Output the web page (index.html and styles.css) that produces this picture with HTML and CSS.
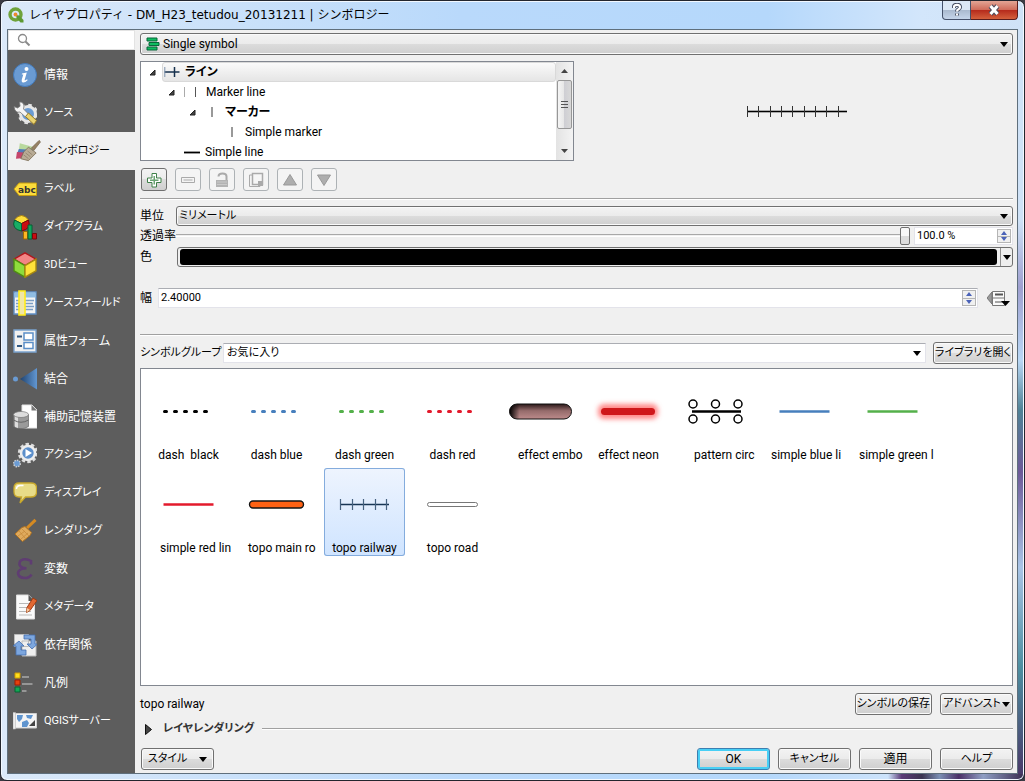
FILE: index.html
```html
<!DOCTYPE html>
<html lang="ja">
<head>
<meta charset="utf-8">
<title>レイヤプロパティ</title>
<link rel="stylesheet" href="styles.css">
</head>
<body>
<div class="window">
  <header class="titlebar">
    <svg class="logo" viewBox="0 0 16 16"><circle cx="7.5" cy="7.5" r="5.5" fill="none" stroke="#6fa33a" stroke-width="3.4"/><path d="M8 8l3.2.6L15.5 13v2.5h-3L8.6 11z" fill="#5d9a33"/><circle cx="7.5" cy="7.5" r="1.9" fill="#ee8a2d"/></svg>
    <h1 class="title">レイヤプロパティ - DM_H23_tetudou_20131211 | シンボロジー</h1>
    <div class="caption">
      <button class="cap cap-help" aria-label="ヘルプ表示"><svg viewBox="0 0 12 14"><path d="M3 5V4q0-2.200 3-2.200T9 4.200Q9 5.500 7.500 6.300 6 7 6 8.500M6 10.500v2" fill="none" stroke="#40485c" stroke-width="4"/><path d="M3 5V4q0-2.200 3-2.200T9 4.200Q9 5.500 7.500 6.300 6 7 6 8.500M6 10.500v2" fill="none" stroke="#fff" stroke-width="2.200"/></svg></button>
      <button class="cap cap-close" aria-label="閉じる"><svg viewBox="0 0 12 12"><path d="M2.500 2l7 8M9.500 2l-7 8" stroke="#4b4a5a" stroke-width="5"/><path d="M2.500 2l7 8M9.500 2l-7 8" stroke="#fff" stroke-width="3"/></svg></button>
    </div>
  </header>
  <div class="client">
    <aside class="sidebar">
      <label class="search"><svg viewBox="0 0 14 14"><circle cx="5.500" cy="5.500" r="4" fill="none" stroke="#8a8a8a" stroke-width="1.300"/><path d="M8.500 8.500l4 4" stroke="#8a8a8a" stroke-width="2"/></svg><input type="text" aria-label="検索"></label>
      <nav class="nav">
        <a href="#"><svg viewBox="0 0 24 24"><circle cx="12" cy="12" r="11.500" fill="#6a9bd3" stroke="#4379b8"/><circle cx="13.500" cy="6" r="2" fill="#fff"/><path d="M9 10.500l4.800-1-2.200 7.500q0 1.200 2.600-.7l.4.900q-3 3-5 2.200-1.500-.8-.8-3l1.500-5H8.800z" fill="#fff"/></svg>情報</a>
        <a href="#" class="kana"><svg viewBox="0 0 24 24"><circle cx="15" cy="13" r="7.500" fill="#6a9bd3" stroke="#e6e6e6" stroke-width="3"/><circle cx="15" cy="13" r="9.300" fill="none" stroke="#e6e6e6" stroke-width="2" stroke-dasharray="3.600 3.700"/><path d="M1 5.500L4.500 7l2.600-1.800L6.500 1Q10.500.8 11 5L10.500 8l6 6-3 3L7 11q-5 1.500-6-5.500z" fill="#f5f5f5" stroke="#777" stroke-width=".8"/><path d="M12.500 15.500l3-3.500 8 7.500-2.500 4z" fill="#ead370" stroke="#947a28"/></svg>ソース</a>
        <a href="#" class="kana current" aria-current="page"><svg viewBox="0 0 27 24"><path d="M5 4l15 4-2 6-14-3z" fill="#b9d99e"/><path d="M4 10l15 1-4 7-13-3z" fill="#4f7dba"/><path d="M2 13l14 1-3 5-12 1z" fill="#c5456b"/><path d="M17 9l8-8 1.500 1.500-7 9z" fill="#968164" stroke="#6f5d42" stroke-width=".7"/><path d="M9 13l5-5 8 6-8 8-8-2z" fill="#b9ac96" stroke="#776850" stroke-width=".8"/><path d="M9 16l5 4M11 14l5 4M13 12l5 4" stroke="#85765f" stroke-width=".7"/></svg>シンボロジー</a>
        <a href="#" class="kana"><svg viewBox="0 0 24 24"><path d="M1 12l5-6h17.500v12.500H6z" fill="#fcdc3b" stroke="#c59d12"/><text x="5" y="15.500" class="tag-text">abc</text></svg>ラベル</a>
        <a href="#" class="kana"><svg viewBox="0 0 24 24"><path d="M8.500 8.500L1.500 5q3-4.500 7-4.500T15.500 5z" fill="#fcdc3b" stroke="#a47c10"/><path d="M8.500 8.500L15.500 5q3 9-7 11z" fill="#c90d12" stroke="#73090c"/><path d="M8.500 8.500V16Q-2 14 1.500 5z" fill="#17ad65" stroke="#075c34"/><path d="M10.500 16.500h4V24h-4z" fill="#fcb625" stroke="#a06a00"/><path d="M15 10h4v14h-4z" fill="#10a55a" stroke="#075c34"/><path d="M19.500 18.500h4V24h-4z" fill="#c90d12" stroke="#73090c"/></svg>ダイアグラム</a>
        <a href="#" class="kana"><svg viewBox="0 0 24 26"><path d="M12 .8l11 6.400-11 6.400L1 7.200z" fill="#f38585" stroke="#b0171c" stroke-width="1.400"/><path d="M1 7.200l11 6.400v11.600L1 18.800z" fill="#8fdd3c" stroke="#4f8e12" stroke-width="1.400"/><path d="M23 7.200l-11 6.400v11.600l11-6.400z" fill="#ffe13a" stroke="#a98a10" stroke-width="1.400"/></svg>3Dビュー</a>
        <a href="#" class="kana"><svg viewBox="0 0 24 26"><path d="M1 2h22v22H1z" fill="#f4f4f4" stroke="#5f8fc5" stroke-width="1.400"/><path d="M1.500 2.500h21v5h-21z" fill="#8fbce2"/><path d="M3 10.500h4m4 0h10M3 13.500h4m4 0h9M3 16.500h4m4 0h10M3 19.500h4m4 0h9" stroke="#7d9fc5" stroke-width="1.300"/><path d="M6 1h6v24H6z" fill="#f1e7a5" stroke="#ffec1a" stroke-width="1.600"/></svg>ソースフィールド</a>
        <a href="#"><svg viewBox="0 0 24 24"><path d="M1 1h22v22H1z" fill="#f1f1f1" stroke="#7aa2ce" stroke-width="1.400"/><path d="M4 7.500h5M4 17h5" stroke="#335a84" stroke-width="2"/><path d="M11 4h9v7h-9zM11 13.500h9v6h-9z" fill="#fff" stroke="#5b8fc8" stroke-width="1.500"/></svg>属性フォーム</a>
        <a href="#"><svg viewBox="0 0 24 24"><defs><linearGradient id="join"><stop stop-color="#20436f"/><stop offset="1" stop-color="#6297d2"/></linearGradient></defs><circle cx="2.500" cy="12" r="2.500" fill="#6a9bd3"/><path d="M7 12L24 1v21.500z" fill="url(#join)"/></svg>結合</a>
        <a href="#"><svg viewBox="0 0 24 26"><path d="M9 1h10l5 5v18H9z" fill="#fff" stroke="#e5e5e5"/><path d="M18.500 1v5.500H24z" fill="#777"/><path d="M.5 10.500v12q7.500 4.500 15 0v-12z" fill="#9a9a9a" stroke="#666" stroke-width=".7"/><path d="M2 12v11l3 1V12z" fill="#ddd"/><path d="M.5 16q7.500 4.500 15 0" fill="none" stroke="#666"/><ellipse cx="8" cy="10.500" rx="7.500" ry="3" fill="#ddd" stroke="#777" stroke-width=".7"/></svg>補助記憶装置</a>
        <a href="#" class="kana"><svg viewBox="0 0 24 26"><circle cx="15" cy="11" r="8.900" fill="none" stroke="#ddd" stroke-width="2.500" stroke-dasharray="3.400 2.200"/><circle cx="15" cy="11" r="7" fill="#5c8fcb" stroke="#eee" stroke-width="2.600"/><path d="M12.500 7l6.500 4-6.500 4z" fill="#fff"/><circle cx="4" cy="21.500" r="3.300" fill="#6a9bd3" stroke="#ccc" stroke-width="1.500" stroke-dasharray="1.500 1"/></svg>アクション</a>
        <a href="#" class="kana"><svg viewBox="0 0 24 24"><path d="M6 2h12q5.500 0 5.500 5v4q0 5-5.500 5h-5.500L7 22l1.500-6H6Q1 16 1 11V7q0-5 5-5z" fill="#e8dc88" stroke="#c9a92c" stroke-width="1.300"/><path d="M3.500 8q0-3.500 4-3.500h3" fill="none" stroke="#fff" stroke-width="1.500"/></svg>ディスプレイ</a>
        <a href="#" class="kana"><svg viewBox="0 0 24 24"><path d="M14 9L22.500.8" stroke="#d58a22" stroke-width="3"/><path d="M9 8.500l3-1 6.500 6-1.500 3-7.500 6L2 15z" fill="#dfaa5d" stroke="#b37421"/><path d="M9 10l7 7M6 12l6 7M12 12l-7 5M15 14l-7 6" stroke="#c78a3b" stroke-width=".8"/></svg>レンダリング</a>
        <a href="#"><svg viewBox="0 0 24 24"><path d="M18 7.500V4q-4-2.500-8-1.500T6.500 7.700Q7.500 11.200 13.500 11.200 5.500 11.500 5 16q.5 5 7 5 4.500 0 6.500-3.500" fill="none" stroke="#5f3d72" stroke-width="2.600"/></svg>変数</a>
        <a href="#" class="kana"><svg viewBox="0 0 24 26"><path d="M3.500 1h12l6 6v18h-18z" fill="#fafafa" stroke="#ddd"/><path d="M15.500 1v6h6z" fill="#555"/><path d="M6 9.500h10M6 13.500h8M6 17.500h12M6 21h13" stroke="#b9b9b9" stroke-width="1.200"/><path d="M20 4l4 2.500-7 10-3.500 2 .5-5z" fill="#e26832" stroke="#9f3b12"/><path d="M14 14l3 2-3.500 2.500z" fill="#f5cba0"/></svg>メタデータ</a>
        <a href="#"><svg viewBox="0 0 24 24"><path d="M1.500 1.500h14v12h-14zM9 8h14v15H9z" fill="#efefef" stroke="#bbb"/><path d="M11 2h11v9h2.500L19 16l-5-5h4V6h-7z" fill="#7ca6de" stroke="#456fb0" stroke-width=".8"/><path d="M13 22H3v-9H0l6-5 5 5H8v4h5z" fill="#7ca6de" stroke="#456fb0" stroke-width=".8"/></svg>依存関係</a>
        <a href="#"><svg viewBox="0 0 24 24"><path d="M2 2h5v5H2z" fill="#fde01e" stroke="#d29a00"/><path d="M2 9h5v5H2z" fill="#e5400e" stroke="#a01c00"/><path d="M2 16h5v5H2z" fill="#13a655" stroke="#066333"/><path d="M9 6h7M9 13h10.500M9 20h4.500" stroke="#969696" stroke-width="2"/></svg>凡例</a>
        <a href="#" class="kana"><svg viewBox="0 0 24 24"><path d="M1.500 4.500h22V19h-22z" fill="#f5f5f5" stroke="#cfcfcf"/><path d="M4 6h6l-1 4-3 3-2-3zM13 6h7l-2 4-4-1zM9 13l5-2 2 3-2 4H9z" fill="#6095cf"/><path d="M16 17l6-6v6z" fill="#444"/><path d="M0 3.500h2.500V20H0z" fill="#ececec" stroke="#bbb" stroke-width=".6"/></svg>QGISサーバー</a>
      </nav>
    </aside>
    <main class="main">
      <div class="combo renderer">
        <svg class="combo-icon" viewBox="0 0 14 14"><path d="M1 1h10v3H1zM3 5.500h10v3H3zM1 10h10v3H1z" fill="#0fbd60" stroke="#08663a"/></svg>
        <select aria-label="シンボルの種類"><option>Single symbol</option></select>
        <svg class="arrow" viewBox="0 0 8 5"><path d="M0 0h8L4 5z"/></svg>
      </div>
      <div class="top">
        <div class="tree">
          <ul class="tree-list">
            <li class="row level-1 selected"><svg class="fold" viewBox="0 0 7 7"><path d="M6 1v5H1z" fill="#444" stroke="#222"/></svg><span class="node strong"><svg viewBox="0 0 16 12"><path d="M.5 6h15M10.500 1v10" stroke="#16304d" stroke-width="1.500"/><path d="M.8 1v10" stroke="#7c92ab"/></svg>ライン</span></li>
            <li class="row level-2"><svg class="fold" viewBox="0 0 7 7"><path d="M6 1v5H1z" fill="#444" stroke="#222"/></svg><span class="node wide"><svg viewBox="0 0 16 12"><path d="M1.500 1v10" stroke="#aaa"/><path d="M12.500 1v10" stroke="#555"/></svg>Marker line</span></li>
            <li class="row level-3"><svg class="fold" viewBox="0 0 7 7"><path d="M6 1v5H1z" fill="#444" stroke="#222"/></svg><span class="node strong"><svg viewBox="0 0 16 12"><path d="M8 1v10" stroke="#999" stroke-width="2"/></svg>マーカー</span></li>
            <li class="row level-4"><span class="node"><svg viewBox="0 0 16 12"><path d="M8 1v10" stroke="#999" stroke-width="2"/></svg>Simple marker</span></li>
            <li class="row level-2b"><span class="node"><svg viewBox="0 0 16 12"><path d="M0 6.500h16" stroke="#999" stroke-width="3"/><path d="M0 6.500h16" stroke="#000"/></svg>Simple line</span></li>
          </ul>
          <div class="scroll"><svg viewBox="0 0 7 4"><path d="M0 4l3.500-4L7 4z"/></svg><div class="thumb"><i></i><i></i><i></i></div><svg class="down" viewBox="0 0 7 4"><path d="M0 0l3.500 4L7 0z"/></svg></div>
        </div>
        <div class="preview"><svg viewBox="0 0 102 14"><path d="M1 7.500h100" stroke="#aaa" stroke-width="3"/><path d="M1 7.500h100" stroke="#000"/><path d="M1.500 2v11M12.500 2v11M24.500 2v11M35.500 2v11M46.500 2v11M58.500 2v11M69.500 2v11M80.500 2v11M92.500 2v11" stroke="#333"/></svg></div>
      </div>
      <div class="tools">
        <button class="tool" aria-label="追加"><svg viewBox="0 0 16 16"><path d="M6 1.500h4.500V6H15v4.500h-4.500V15H6v-4.500H1.500V6H6z" fill="#fff" stroke="#3f8049"/><path d="M8.250 4v8.500M4 8.250h8.500" stroke="#6aa372" stroke-width="1.500"/></svg></button>
        <button class="tool" aria-label="削除" disabled><svg viewBox="0 0 16 16"><path d="M1.500 5.500h13v5h-13z" fill="#f4f4f4" stroke="#aaa"/><path d="M3.500 8h9" stroke="#aaa"/></svg></button>
        <button class="tool" aria-label="ロック" disabled><svg viewBox="0 0 16 16"><path d="M4.500 4.500q0-3 4-3t4 3v4" fill="none" stroke="#aaa" stroke-width="2"/><path d="M2 8h12v7H2z" fill="#b3b3b3"/><path d="M3 10h10M3 12.500h10" stroke="#c9c9c9"/></svg></button>
        <button class="tool" aria-label="複製" disabled><svg viewBox="0 0 16 16"><path d="M4 3H1.500v11.500H12V13" fill="none" stroke="#aaa"/><path d="M4.500 1.500h10v11h-10z" fill="#f6f6f6" stroke="#aaa" stroke-width="1.500"/><path d="M10 9h5v5h-5z" fill="#aaa"/></svg></button>
        <button class="tool" aria-label="上へ" disabled><svg viewBox="0 0 16 16"><path d="M1.500 13L8 2.500 14.500 13z" fill="#aeaeae" stroke="#999"/></svg></button>
        <button class="tool" aria-label="下へ" disabled><svg viewBox="0 0 16 16"><path d="M1.500 3L8 13.500 14.500 3z" fill="#aeaeae" stroke="#999"/></svg></button>
      </div>
      <hr>
      <div class="form">
        <label for="unit">単位</label>
        <div class="combo kana"><select id="unit"><option>ミリメートル</option></select><svg class="arrow" viewBox="0 0 8 5"><path d="M0 0h8L4 5z"/></svg></div>
        <label for="opacity">透過率</label>
        <div class="opacity"><input id="opacity" type="range" min="0" max="100" value="100"><div class="spin"><input type="text" value="100.0 %" aria-label="透過率の値"><span class="steps"><button aria-label="増やす"><svg viewBox="0 0 6 4"><path d="M0 4l3-4 3 4z"/></svg></button><button aria-label="減らす"><svg viewBox="0 0 6 4"><path d="M0 0l3 4 3-4z"/></svg></button></span></div></div>
        <label for="color">色</label>
        <div class="color"><button id="color" class="swatch" aria-label="色"></button><button class="color-menu" aria-label="色メニュー"><svg class="arrow" viewBox="0 0 8 5"><path d="M0 0h8L4 5z"/></svg></button></div>
      </div>
      <div class="width">
        <label for="width">幅</label>
        <div class="spin"><input id="width" type="text" value="2.40000"><span class="steps"><button aria-label="増やす"><svg viewBox="0 0 6 4"><path d="M0 4l3-4 3 4z"/></svg></button><button aria-label="減らす"><svg viewBox="0 0 6 4"><path d="M0 0l3 4 3-4z"/></svg></button></span></div>
        <button class="override" aria-label="データによって定義"><svg viewBox="0 0 23 17"><path d="M0 8l5-6v12z" fill="#999" stroke="#777"/><path d="M5.500 1.500h12v14h-12z" fill="#fafafa" stroke="#777"/><path d="M8 4.500h8" stroke="#555" stroke-width="2"/><path d="M6 8h11" stroke="#777"/><path d="M8 12h8" stroke="#555"/><path d="M14 11h9l-4.500 5z" fill="#000"/></svg></button>
      </div>
      <hr>
      <div class="group kana">
        <label for="group">シンボルグループ</label>
        <div class="field"><select id="group"><option>お気に入り</option></select><svg class="arrow" viewBox="0 0 8 5"><path d="M0 0h8L4 5z"/></svg></div>
        <button class="push snug">ライブラリを開く</button>
      </div>
      <ul class="symbols">
        <li><svg viewBox="0 0 81 72"><path d="M16.500 36.500h48" class="dash" stroke="#000"/></svg><span>dash  black</span></li>
        <li><svg viewBox="0 0 81 72"><path d="M16.500 36.500h48" class="dash" stroke="#477fbd"/></svg><span>dash blue</span></li>
        <li><svg viewBox="0 0 81 72"><path d="M16.500 36.500h48" class="dash" stroke="#54b04a"/></svg><span>dash green</span></li>
        <li><svg viewBox="0 0 81 72"><path d="M16.500 36.500h48" class="dash" stroke="#e31a2c"/></svg><span>dash red</span></li>
        <li><svg viewBox="0 0 81 72"><defs><linearGradient id="emboss" x2="0" y2="1"><stop stop-color="#2a1717"/><stop offset=".45" stop-color="#956b6b"/><stop offset="1" stop-color="#bd8b8b"/></linearGradient><linearGradient id="cap"><stop stop-color="#000"/><stop offset=".16" stop-color="#000" stop-opacity="0"/></linearGradient></defs><rect x="9.500" y="29" width="62" height="15" rx="7.500" fill="url(#emboss)"/><rect x="9.500" y="29" width="62" height="15" rx="7.500" fill="url(#cap)" stroke="#111"/></svg><span class="inset-l">effect embo</span></li>
        <li><svg viewBox="0 0 81 72"><defs><filter id="glow" x="-20%" y="-100%" width="140%" height="300%"><feGaussianBlur stdDeviation="2.500"/></filter></defs><rect x="10" y="29" width="60" height="15" rx="6" fill="#ff6b6b" fill-opacity=".8" filter="url(#glow)"/><path d="M16.500 36.500h47" stroke="#cf171a" stroke-width="7" stroke-linecap="round"/></svg><span>effect neon</span></li>
        <li><svg viewBox="0 0 81 72"><path d="M16 36.500h49" stroke="#000" stroke-width="2.600"/><g fill="#fff" stroke="#000" stroke-width="1.500"><circle cx="17" cy="29" r="4"/><circle cx="39.500" cy="29" r="4"/><circle cx="62" cy="29" r="4"/><circle cx="17" cy="44" r="4"/><circle cx="39.500" cy="44" r="4"/><circle cx="62" cy="44" r="4"/></g></svg><span class="inset-l">pattern circ</span></li>
        <li><svg viewBox="0 0 81 72"><path d="M15.500 36.500h50" stroke="#477fbd" stroke-width="2.600"/></svg><span class="inset-s">simple blue li</span></li>
        <li><svg viewBox="0 0 81 72"><path d="M15.500 36.500h50" stroke="#54b04a" stroke-width="2.600"/></svg><span class="inset-s">simple green l</span></li>
        <li><svg viewBox="0 0 81 72"><path d="M15.500 36.500h50" stroke="#e31a2c" stroke-width="2.600"/></svg><span class="inset-m">simple red lin</span></li>
        <li><svg viewBox="0 0 81 72"><rect x="13.500" y="33" width="54" height="7" rx="3.500" fill="#ff6214" stroke="#151515" stroke-width="1.400"/></svg><span class="inset-m">topo main ro</span></li>
        <li class="active"><svg viewBox="0 0 81 72"><path d="M16 36.500h49" stroke="#173554" stroke-width="1.400"/><path d="M16.500 31v11M28.500 31v11M39.500 31v11M51.500 31v11M62.500 31v11" stroke="#45617f" stroke-width="1.200"/></svg><span>topo railway</span></li>
        <li><svg viewBox="0 0 81 72"><rect x="15.500" y="34.500" width="50" height="4" rx="2" fill="#fff" stroke="#777"/></svg><span>topo road</span></li>
      </ul>
      <div class="status"><span class="name">topo railway</span><button class="push snug">シンボルの保存</button><button class="push snug">アドバンスト<svg class="arrow" viewBox="0 0 8 5"><path d="M0 0h8L4 5z"/></svg></button></div>
      <div class="rendering"><button class="expander"><svg viewBox="0 0 7 11"><path d="M.5.5l6 5-6 5z" fill="#444" stroke="#111"/></svg>レイヤレンダリング</button><hr></div>
      <footer class="actions kana">
        <button class="push style">スタイル<svg class="arrow" viewBox="0 0 8 5"><path d="M0 0h8L4 5z"/></svg></button>
        <button class="push default">OK</button><button class="push">キャンセル</button><button class="push apply">適用</button><button class="push">ヘルプ</button>
      </footer>
    </main>
  </div>
</div>
</body>
</html>
```
FILE: styles.css
```css
* { box-sizing: border-box; }
body, h1, ul, hr { margin: 0; padding: 0; }
body {
  background: #3b3b44;
  color: #000;
  font: 12px/16px Roboto, "Noto Sans CJK JP", sans-serif;
  font-feature-settings: "palt";
}
ul { list-style: none; }
svg { display: block; flex: none; }
button, input, select {
  margin: 0;
  padding: 0;
  border: 0;
  background: none;
  color: inherit;
  font: inherit;
  font-feature-settings: inherit;
}
hr { border: 0; border-top: 1px solid #a0a0a0; border-bottom: 1px solid #fff; }
.kana { font-size: 11px; }

/* Window frame */
.window {
  display: flex;
  flex-direction: column;
  height: 100vh;
  padding: 0 6px 6px;
  border: 1px solid #23262e;
  border-radius: 7px;
  background:
    linear-gradient(to right, transparent, #5b3a78 10%, #3b3350 25%, #7b8fb4 38%, #4a2f66 52%, #8f9fc4 70%, #3a2c50) right bottom / 136px 6px no-repeat,
    linear-gradient(transparent, #9fa0d0 12%, #b9d7f5 25%, #4f8296 34%, #6d5a98 45%, #a9c4e6 62%, #4d8ea0 80%, #4a3566) right bottom / 6px 560px no-repeat,
    linear-gradient(to right, #dbe9f9 0, #b9d9fb 45%, #b5d8fb 75%, #d3e6fb 90%, #cfe2f7 100%);
  box-shadow: inset 0 0 0 1px #f2f8ff;
}
.titlebar { display: flex; align-items: center; height: 28px; flex: none; padding-left: 1px; }
.logo { width: 16px; height: 16px; }
.title {
  flex: 1;
  margin-left: 5px;
  font: 12px/18px "DejaVu Sans", "Noto Sans CJK JP", sans-serif;
  font-feature-settings: normal;
  white-space: nowrap;
}
.caption { display: flex; align-self: flex-start; }
.cap { display: flex; align-items: center; justify-content: center; height: 19px; border: 1px solid #45516a; border-top: 0; }
.cap-help { width: 29px; border-radius: 0 0 0 4px; background: linear-gradient(#dce8f5 50%, #a9b9ce 50%, #c5d5ea); }
.cap-help svg { width: 12px; height: 14px; }
.cap-close { width: 47px; border-color: #5a1d1d; border-left: 0; border-radius: 0 0 4px 0; background: linear-gradient(#e3a595, #cf6a58 50%, #b5291b 50%, #d4603c); }
.cap-close svg { width: 12px; height: 12px; }
.client { display: flex; flex: 1; min-height: 0; border: 1px solid #5f6f7c; background: #f0f0f0; }

/* Sidebar */
.sidebar { width: 127px; flex: none; background: #5d5d5d; }
.search { display: flex; align-items: center; height: 20px; margin-bottom: 6px; padding-left: 8px; border: 1px solid #e3e3e3; background: #fff; }
.search svg { width: 14px; height: 14px; }
.search input { flex: 1; min-width: 0; outline: 0; }
.nav a { display: flex; align-items: center; gap: 7px; height: 38px; padding-left: 5px; color: #fff; text-decoration: none; white-space: nowrap; }
.nav svg { width: 24px; height: 26px; }
.nav a.current { gap: 6px; padding-left: 7px; background: #f0f0f0; color: #000; }
.nav .current svg { width: 26px; }
.tag-text { font: bold 9px "DejaVu Sans", sans-serif; fill: #333; }

/* Shared controls */
.arrow { width: 8px; height: 5px; }
.combo {
  display: flex;
  align-items: center;
  height: 20px;
  padding: 0 4px 0 2px;
  border: 1px solid #707070;
  border-radius: 3px;
  background: linear-gradient(#f3f3f3, #ebebeb 50%, #dcdcdc 50%, #cfcfcf);
  box-shadow: inset 0 0 0 1px #fafafa;
}
.renderer { height: 22px; flex: none; padding-left: 5px; }
.combo-icon { width: 14px; height: 14px; margin-right: 3px; }
select { flex: 1; min-width: 0; appearance: none; outline: 0; }
.push {
  display: flex;
  align-items: center;
  justify-content: center;
  width: 73px;
  height: 22px;
  border: 1px solid #707070;
  border-radius: 3px;
  background: linear-gradient(#f3f3f3, #ebebeb 50%, #dcdcdc 50%, #cfcfcf);
  box-shadow: inset 0 0 0 1px #fafafa;
  white-space: nowrap;
}
.push.snug { width: auto; min-width: 73px; padding: 0 1px; font-size: 11px; }
.push.snug .arrow { margin-left: 1px; }
.push.apply { font-size: 12px; }
.push.default { border-color: #3c7fb1; font-size: 12px; box-shadow: inset 0 0 0 2px #48cff5; }
.spin { display: flex; height: 20px; padding: 1px; border: 1px solid #e3e3ea; border-top-color: #abadb3; background: #fff; font-size: 11px; }
.spin input { flex: 1; min-width: 0; padding-left: 1px; outline: 0; }
.steps { display: flex; flex-direction: column; width: 14px; border: 1px solid #b5b5b5; background: #f0f0f0; }
.steps button { display: flex; flex: 1; align-items: center; justify-content: center; }
.steps button + button { border-top: 1px solid #b5b5b5; }
.steps svg { width: 6px; height: 4px; fill: #4a62b8; }

/* Main column */
.main { display: flex; flex: 1; flex-direction: column; min-width: 0; padding: 3px 4px 3px 5px; }
.top { display: flex; margin-top: 6px; }
.tree { display: flex; width: 434px; height: 100px; overflow: hidden; border: 1px solid #828790; background: #fff; }
.tree-list { flex: 1; }
.row { display: flex; align-items: center; height: 20px; }
.fold { width: 7px; height: 7px; margin-right: 6px; }
.level-1 { padding-left: 8px; }
.level-2 { padding-left: 27px; }
.level-3 { padding-left: 48px; }
.level-4 { padding-left: 81px; }
.level-2b { padding-left: 41px; }
.node { display: flex; flex: 1; align-items: center; gap: 5px; height: 20px; padding-left: 2px; }
.node.wide { gap: 7px; }
.node svg { width: 16px; height: 12px; }
.strong { font-weight: bold; }
.selected .node { border: 1px solid #d9d9d9; border-radius: 3px; padding-left: 1px; background: linear-gradient(#fafafa, #e5e5e5); }
.scroll { display: flex; flex-direction: column; align-items: center; width: 17px; padding: 7px 1px; background: linear-gradient(to right, #e3e3e3, #f3f3f3); }
.scroll svg { width: 7px; height: 4px; fill: #444; }
.scroll .down { margin-top: auto; }
.thumb { display: flex; flex-direction: column; align-items: center; justify-content: center; gap: 2px; width: 15px; height: 49px; margin-top: 7px; border: 1px solid #979797; border-radius: 2px; background: linear-gradient(to right, #f5f5f5, #e5e5e5 50%, #cfcfd4 50%, #d8d8d8); }
.thumb i { width: 7px; height: 1px; background: #555; }
.preview { display: flex; flex: 1; align-items: center; justify-content: center; padding-left: 7px; }
.preview svg { width: 102px; height: 14px; }
.tools { display: flex; gap: 8px; margin: 7px 0 7px 1px; }
.tool { display: flex; align-items: center; justify-content: center; width: 26px; height: 23px; border: 1px solid #707070; border-radius: 3px; background: linear-gradient(#f3f3f3, #ebebeb 50%, #dcdcdc 50%, #cfcfcf); }
.tool:disabled { border-color: #adb2b5; background: #f4f4f4; }
.tool svg { width: 16px; height: 16px; }

.form { display: grid; grid-template-columns: 36px 1fr; align-items: center; margin-top: 6px; }
.opacity { display: flex; align-items: center; gap: 4px; }
.opacity > input { flex: 1; min-width: 0; height: 20px; appearance: none; background: linear-gradient(#a8a8a8, #a8a8a8) 0 8px / 100% 1px no-repeat, linear-gradient(#fff, #fff) 0 10px / 100% 1px no-repeat; }
.opacity > input::-webkit-slider-thumb { appearance: none; width: 10px; height: 18px; border: 1px solid #707070; border-radius: 2px; background: linear-gradient(#f8f8f8 50%, #dcdcdc 50%); }
.opacity .spin { width: 99px; height: 18px; border-top-color: #e3e3ea; }
.color { display: flex; height: 20px; margin: 1px 0 0 1px; border: 1px solid #707070; border-radius: 3px; background: #eee; }
.swatch { flex: 1; margin: 1px 3px 1px 2px; border-radius: 3px; background: #000; }
.color-menu { display: flex; align-items: center; justify-content: center; width: 12px; border-left: 1px solid #909090; }
.width { display: flex; align-items: center; margin: 21px 0 26px; }
.width label { width: 18px; }
.width .spin { flex: 1; }
.override { margin: 0 3px 0 9px; }
.override svg { width: 23px; height: 17px; }

.group { display: flex; align-items: center; margin: 6px 0 4px; }
.group label { width: 83px; white-space: nowrap; }
.field { display: flex; flex: 1; align-items: center; height: 20px; margin-right: 7px; padding: 0 4px 0 3px; border: 1px solid #e3e3ea; border-top-color: #abadb3; background: #fff; }

/* Symbol gallery */
.symbols { display: grid; flex: 1; grid-template-columns: repeat(auto-fill, 81px); align-content: start; gap: 5px 7px; min-height: 0; padding: 6px 7px; border: 1px solid #828790; background: #fff; }
.symbols li { height: 88px; border-radius: 3px; text-align: center; }
.symbols svg { width: 81px; height: 72px; }
.symbols span { display: block; white-space: pre; }
.symbols .inset-s { padding-left: 7px; text-align: left; }
.symbols .inset-m { padding-left: 12px; text-align: left; }
.symbols .inset-l { padding-left: 18px; text-align: left; }
.symbols .active { background: linear-gradient(#eef4fe, #cfe4ff); box-shadow: inset 0 0 0 1px #84acdd; }
.dash { stroke-width: 3; stroke-linecap: round; stroke-dasharray: 2 8; }

/* Footer */
.status { display: flex; align-items: center; gap: 8px; margin-top: 7px; }
.name { flex: 1; }
.rendering { display: flex; align-items: center; gap: 8px; height: 18px; margin: 5px 0 10px; }
.rendering hr { flex: 1; }
.expander { display: flex; align-items: center; gap: 11px; padding-left: 5px; color: #333; font-size: 11px; font-weight: bold; }
.expander svg { width: 7px; height: 11px; }
.actions { display: flex; gap: 8px; padding-left: 1px; }
.style { margin-right: auto; gap: 12px; }
```
